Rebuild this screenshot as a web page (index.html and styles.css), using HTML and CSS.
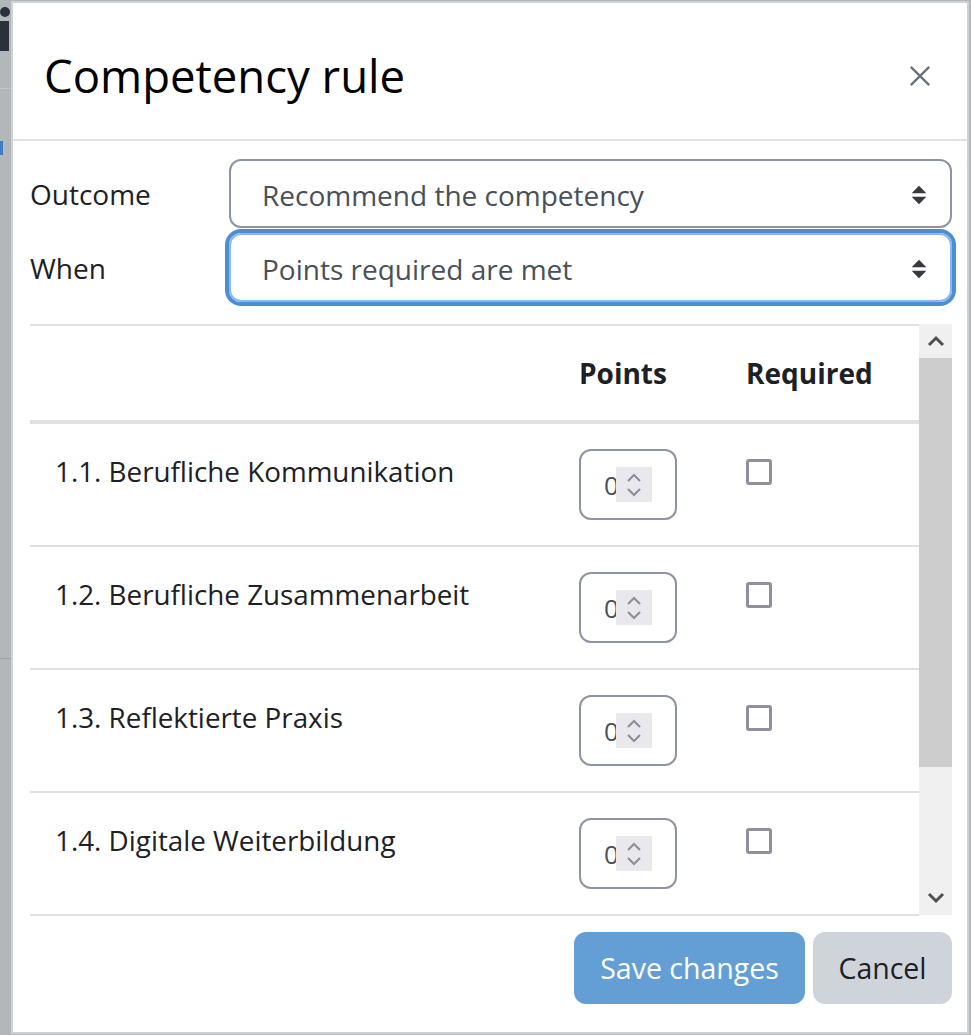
FILE: index.html
```html
<!DOCTYPE html>
<html lang="en">
<head>
    <meta charset="UTF-8">
    <meta name="viewport" content="width=device-width, initial-scale=1.0">
    <title>Competency rule</title>
    <link rel="stylesheet" href="styles.css">
</head>
<body>
    <div class="backdrop-edge">
        <span class="bg-dot"></span>
        <span class="bg-stem"></span>
        <span class="bg-line"></span>
        <span class="bg-blue"></span>
        <span class="bg-line dark"></span>
    </div>
    <div class="modal">
        <div class="modal-header">
            <h2 class="modal-title">Competency rule</h2>
            <button class="close" type="button" aria-label="Close">
                <svg width="24" height="24" viewBox="0 0 24 24"><path d="M2 2 L22 22 M22 2 L2 22" stroke="#6a737b" stroke-width="2.6" fill="none"/></svg>
            </button>
        </div>

        <div class="modal-body">
            <div class="form-row">
                <label>Outcome</label>
                <div class="select">
                    <span>Recommend the competency</span>
                    <svg class="caret" width="18" height="24" viewBox="0 0 18 24"><path d="M9 2 L17 10 H1 Z M9 22 L17 14 H1 Z" fill="#343a40"/></svg>
                </div>
            </div>
            <div class="form-row">
                <label>When</label>
                <div class="select focused">
                    <span>Points required are met</span>
                    <svg class="caret" width="18" height="24" viewBox="0 0 18 24"><path d="M9 2 L17 10 H1 Z M9 22 L17 14 H1 Z" fill="#343a40"/></svg>
                </div>
            </div>

            <div class="table-wrap">
                <div class="table">
                    <div class="tr thead">
                        <div class="td"></div>
                        <div class="td">Points</div>
                        <div class="td">Required</div>
                    </div>
                    <div class="tr">
                        <div class="td name">1.1. Berufliche Kommunikation</div>
                        <div class="td"><div class="num"><span class="num-val">0</span><span class="spin"><svg width="20" height="30" viewBox="0 0 20 30"><path d="M4 11 L10 5 L16 11 M4 19 L10 25 L16 19" stroke="#8f8f9d" stroke-width="2.2" fill="none"/></svg></span></div></div>
                        <div class="td"><span class="check"></span></div>
                    </div>
                    <div class="tr">
                        <div class="td name">1.2. Berufliche Zusammenarbeit</div>
                        <div class="td"><div class="num"><span class="num-val">0</span><span class="spin"><svg width="20" height="30" viewBox="0 0 20 30"><path d="M4 11 L10 5 L16 11 M4 19 L10 25 L16 19" stroke="#8f8f9d" stroke-width="2.2" fill="none"/></svg></span></div></div>
                        <div class="td"><span class="check"></span></div>
                    </div>
                    <div class="tr">
                        <div class="td name">1.3. Reflektierte Praxis</div>
                        <div class="td"><div class="num"><span class="num-val">0</span><span class="spin"><svg width="20" height="30" viewBox="0 0 20 30"><path d="M4 11 L10 5 L16 11 M4 19 L10 25 L16 19" stroke="#8f8f9d" stroke-width="2.2" fill="none"/></svg></span></div></div>
                        <div class="td"><span class="check"></span></div>
                    </div>
                    <div class="tr">
                        <div class="td name">1.4. Digitale Weiterbildung</div>
                        <div class="td"><div class="num"><span class="num-val">0</span><span class="spin"><svg width="20" height="30" viewBox="0 0 20 30"><path d="M4 11 L10 5 L16 11 M4 19 L10 25 L16 19" stroke="#8f8f9d" stroke-width="2.2" fill="none"/></svg></span></div></div>
                        <div class="td"><span class="check"></span></div>
                    </div>
                </div>
                <div class="scrollbar">
                    <div class="sb-btn"><svg width="18" height="12" viewBox="0 0 18 12"><path d="M2 10 L9 3 L16 10" stroke="#505050" stroke-width="3" fill="none"/></svg></div>
                    <div class="sb-thumb"></div>
                    <div class="sb-track"></div>
                    <div class="sb-btn"><svg width="18" height="12" viewBox="0 0 18 12"><path d="M2 2 L9 9 L16 2" stroke="#505050" stroke-width="3" fill="none"/></svg></div>
                </div>
            </div>
        </div>

        <div class="modal-footer">
            <button class="btn btn-primary" type="button" disabled>Save changes</button>
            <button class="btn btn-secondary" type="button">Cancel</button>
        </div>
    </div>
</body>
</html>
```

FILE: styles.css
```css
body {
    margin: 0;
    background-color: #b4b7ba;
    font-family: "Open Sans", "Noto Sans", sans-serif;
    color: #1d2125;
    display: flex;
    padding-top: 1px;
    height: 1035px;
    box-sizing: border-box;
    overflow: hidden;
}
.backdrop-edge {
    width: 11px;
    display: flex;
    flex-direction: column;
}
.bg-dot {
    width: 10px;
    height: 10px;
    border-radius: 50%;
    background: #2b303a;
    margin-top: 6px;
}
.bg-stem {
    width: 9px;
    height: 30px;
    background: #2b303a;
    margin-top: 4px;
}
.bg-line {
    height: 1px;
    background: #c3c6c9;
    margin-top: 37px;
}
.bg-line.dark {
    background: #9da1a5;
    margin-top: 503px;
}
.bg-blue {
    width: 3px;
    height: 14px;
    background: #3d7fc4;
    margin-top: 52px;
}
.modal {
    width: 954px;
    height: 1029px;
    background: #fff;
    border: 2px solid #cfd1d3;
    display: flex;
    flex-direction: column;
}
.modal-header {
    height: 138px;
    box-sizing: border-box;
    display: flex;
    align-items: center;
    justify-content: space-between;
    padding: 9px 36px 0 31px;
    border-bottom: 2px solid #dee2e6;
}
.modal-title {
    margin: 0;
    font-size: 45.5px;
    font-weight: 400;
    color: #000;
    line-height: 1.2;
}
.close {
    border: none;
    background: none;
    padding: 0;
    display: flex;
}
.close svg {
    width: 22px;
    height: 22px;
}
.modal-body {
    padding: 18px 15px 0 17px;
}
.form-row {
    display: flex;
    align-items: center;
    margin-bottom: 5px;
}
.form-row label {
    width: 199px;
    font-size: 28px;
}
.select {
    flex: 1;
    height: 69px;
    box-sizing: border-box;
    border: 2px solid #8f959e;
    border-radius: 12px;
    display: flex;
    align-items: center;
    justify-content: space-between;
    padding: 2px 22px 0 31px;
    font-size: 28px;
    color: #495057;
}
.select.focused {
    border-color: #8cb8e8;
    box-shadow: 0 0 0 4px #4a8fd6;
}
.select .caret {
    width: 18px;
    height: 22px;
}
.table-wrap {
    margin-top: 22px;
    display: flex;
    height: 591px;
}
.table {
    flex: 1;
}
.tr {
    display: grid;
    grid-template-columns: 524px 167px 1fr;
    height: 121px;
    border-bottom: 2px solid #dee2e6;
    font-size: 27.8px;
}
.thead {
    height: 94px;
    border-top: 2px solid #dee2e6;
    border-bottom: 4px solid #dee2e6;
    font-weight: 700;
    font-size: 28px;
    align-items: center;
}
.tr .td {
    padding-left: 25px;
}
.tr:not(.thead) .td {
    padding-top: 25px;
}
.td.name {
    padding-top: 28px !important;
}
.num {
    width: 98px;
    height: 71px;
    box-sizing: border-box;
    border: 2px solid #8f959e;
    border-radius: 12px;
    display: flex;
    align-items: center;
    padding-left: 23px;
}
.num-val {
    width: 12px;
    overflow: hidden;
    color: #495057;
    font-size: 26px;
}
.spin {
    width: 36px;
    height: 35px;
    background: #e9e9ed;
    display: flex;
    align-items: center;
    justify-content: center;
}
.check {
    display: block;
    width: 26px;
    height: 26px;
    box-sizing: border-box;
    border: 3px solid #8f8f9d;
    border-radius: 3px;
    margin-top: 10px;
}
.scrollbar {
    width: 33px;
    display: flex;
    flex-direction: column;
    background: #f0f0f0;
}
.sb-btn {
    height: 34px;
    display: flex;
    align-items: center;
    justify-content: center;
}
.sb-thumb {
    height: 409px;
    background: #cdcdcd;
}
.sb-track {
    flex: 1;
}
.modal-footer {
    display: flex;
    justify-content: flex-end;
    gap: 8px;
    padding: 17px 15px 0 0;
}
.btn {
    height: 72px;
    border: none;
    border-radius: 12px;
    font-family: "Open Sans", "Noto Sans", sans-serif;
    font-size: 28.5px;
    padding: 0;
}
.btn-primary {
    background-color: #639fd5;
    color: #fff;
    width: 231px;
}
.btn-secondary {
    background-color: #ced4da;
    color: #1d2125;
    width: 139px;
}
```
